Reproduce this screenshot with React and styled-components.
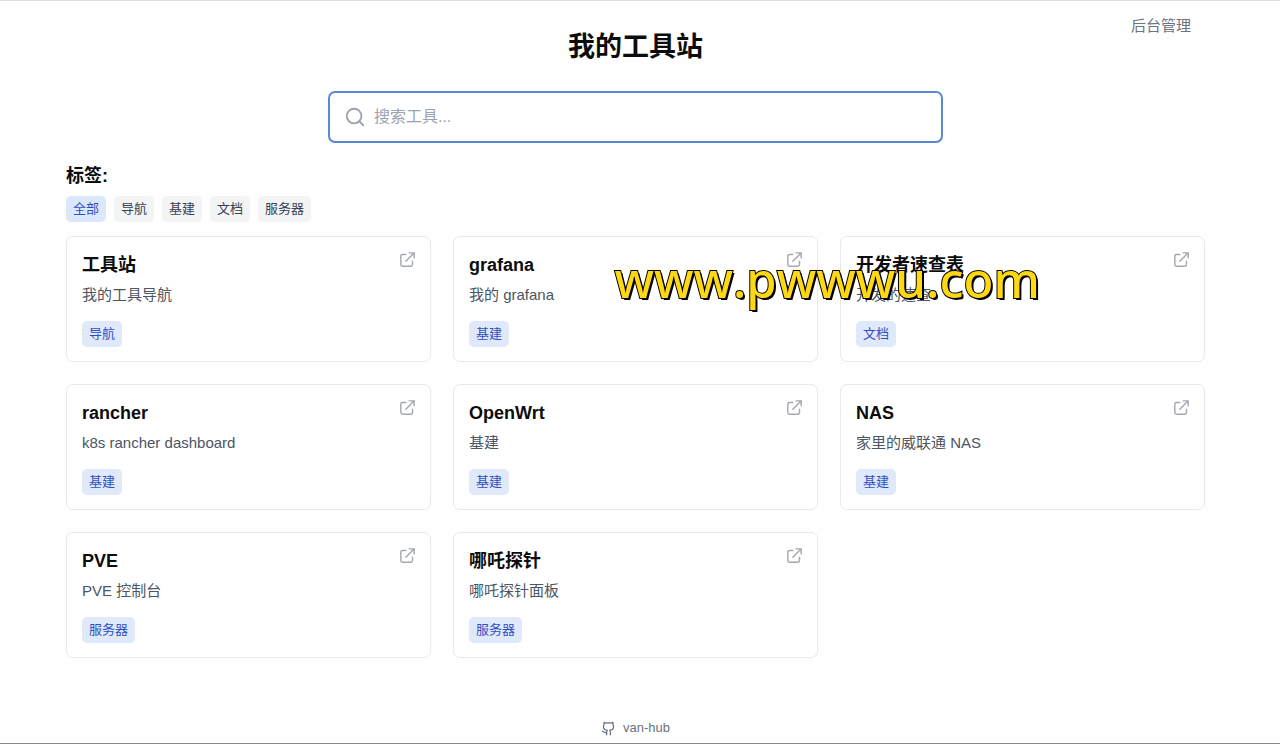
import React, { useState } from 'react';
import styled, { createGlobalStyle } from 'styled-components';
import { Github, Search } from 'lucide-react';

const GlobalStyle = createGlobalStyle`
  * {
    box-sizing: border-box;
  }

  body {
    margin: 0;
    background: #fefefe;
    color: #0c0c0c;
    font-family: 'Liberation Sans', 'Noto Sans CJK SC', sans-serif;
  }
`;

const Page = styled.div`
  position: relative;
  display: flex;
  flex-direction: column;
  min-height: 100vh;
  padding: 0 75px 0 66px;
  border-top: 1px solid #dedede;
  border-bottom: 1px solid #8c8c8c;
`;

const Header = styled.header`
  display: grid;
  grid-template-columns: 1fr auto 1fr;
  padding-top: 14px;
`;

const Title = styled.h1`
  grid-column: 2;
  margin: 13px 0 0;
  font-size: 27px;
  line-height: 38px;
`;

const AdminLink = styled.a`
  justify-self: end;
  align-self: start;
  margin-right: 14px;
  color: #6b7280;
  font-size: 15px;
  line-height: 22px;
  text-decoration: none;
`;

const SearchBox = styled.label`
  display: flex;
  align-items: center;
  gap: 8px;
  width: 54%;
  height: 52px;
  margin: 25px auto 0;
  padding: 0 14px;
  border: 2px solid #5c87d3;
  border-radius: 7px;
  background: #fff;
  color: #9ca3af;
`;

const SearchInput = styled.input`
  flex: 1;
  min-width: 0;
  padding: 0;
  border: none;
  outline: none;
  background: transparent;
  color: #111827;
  font-family: inherit;
  font-size: 16px;
  line-height: 24px;

  &::placeholder {
    color: #9ca3af;
    opacity: 1;
  }
`;

const FilterTitle = styled.h2`
  margin: 20px 0 7px;
  font-size: 18px;
  line-height: 26px;
`;

const TagList = styled.div`
  display: flex;
  flex-wrap: wrap;
  gap: 8px;
`;

const FilterTag = styled.button`
  height: 26px;
  padding: 0 7px;
  border: none;
  border-radius: 5px;
  background: ${props => (props.$active ? '#dbe7fb' : '#f3f4f6')};
  color: ${props => (props.$active ? '#2f4fc4' : '#374151')};
  font-family: inherit;
  font-size: 13px;
  line-height: 26px;
  cursor: pointer;
`;

const Grid = styled.main`
  display: grid;
  grid-template-columns: repeat(3, 1fr);
  gap: 22px;
  margin-top: 14px;
`;

const Card = styled.a`
  display: flex;
  align-items: flex-start;
  justify-content: space-between;
  padding: 15px 15px 14px;
  border: 1px solid #e8e9eb;
  border-radius: 7px;
  background: #fff;
  color: inherit;
  text-decoration: none;
`;

const CardTitle = styled.h3`
  margin: 0;
  font-size: 18px;
  line-height: 26px;
`;

const CardText = styled.p`
  margin: 6px 0 16px;
  color: #4b5563;
  font-size: 15px;
  line-height: 21px;
`;

const CardTag = styled.span`
  display: inline-block;
  padding: 0 7px;
  border-radius: 5px;
  background: #dfe9fa;
  color: #2f4fc4;
  font-size: 13px;
  line-height: 26px;
  vertical-align: top;
`;

const LinkIcon = styled.svg`
  flex: none;
  width: 15px;
  height: 15px;
  fill: none;
  stroke: #a3a7ae;
  stroke-width: 1.7;
  stroke-linecap: round;
  stroke-linejoin: round;
`;

const Footer = styled.footer`
  display: flex;
  justify-content: center;
  margin-top: auto;
  padding-bottom: 6px;
`;

const FooterLink = styled.a`
  display: flex;
  align-items: center;
  gap: 7px;
  color: #6b7280;
  font-size: 13px;
  line-height: 18px;
  text-decoration: none;
`;

const Watermark = styled.div`
  position: absolute;
  top: 250px;
  left: 48%;
  color: #ffd814;
  font-family: 'Noto Sans', sans-serif;
  font-size: 49px;
  font-weight: 500;
  font-kerning: none;
  line-height: 56px;
  white-space: nowrap;
  pointer-events: none;
  -webkit-text-stroke: 2px #000;
  paint-order: stroke fill;
  text-shadow: 2px 2px 0 #000;
`;

const tags = ['全部', '导航', '基建', '文档', '服务器'];

const tools = [
  { name: '工具站', description: '我的工具导航', tag: '导航' },
  { name: 'grafana', description: '我的 grafana', tag: '基建' },
  { name: '开发者速查表', description: '开发的速查', tag: '文档' },
  { name: 'rancher', description: 'k8s rancher dashboard', tag: '基建' },
  { name: 'OpenWrt', description: '基建', tag: '基建' },
  { name: 'NAS', description: '家里的威联通 NAS', tag: '基建' },
  { name: 'PVE', description: 'PVE 控制台', tag: '服务器' },
  { name: '哪吒探针', description: '哪吒探针面板', tag: '服务器' },
];

const ToolCard = ({ tool }) => (
  <Card href="#">
    <div>
      <CardTitle>{tool.name}</CardTitle>
      <CardText>{tool.description}</CardText>
      <CardTag>{tool.tag}</CardTag>
    </div>
    <LinkIcon viewBox="3 3 18 18" aria-hidden="true">
      <path d="M10 6H6a2 2 0 0 0-2 2v10a2 2 0 0 0 2 2h10a2 2 0 0 0 2-2v-4M14 4h6m0 0v6m0-6L10 14" />
    </LinkIcon>
  </Card>
);

const App = () => {
  const [activeTag, setActiveTag] = useState('全部');
  const [query, setQuery] = useState('');

  const visible = tools.filter(
    tool =>
      (activeTag === '全部' || tool.tag === activeTag) &&
      (tool.name + tool.description).toLowerCase().includes(query.toLowerCase())
  );

  return (
    <>
      <GlobalStyle />
      <Page lang="zh-CN">
        <Header>
          <Title>我的工具站</Title>
          <AdminLink href="#">后台管理</AdminLink>
        </Header>
        <SearchBox htmlFor="search">
          <Search size={22} aria-hidden="true" />
          <SearchInput
            id="search"
            type="text"
            placeholder="搜索工具..."
            value={query}
            onChange={e => setQuery(e.target.value)}
          />
        </SearchBox>
        <FilterTitle>标签:</FilterTitle>
        <TagList>
          {tags.map(tag => (
            <FilterTag key={tag} $active={tag === activeTag} onClick={() => setActiveTag(tag)}>
              {tag}
            </FilterTag>
          ))}
        </TagList>
        <Grid>
          {visible.map(tool => (
            <ToolCard key={tool.name} tool={tool} />
          ))}
        </Grid>
        <Footer>
          <FooterLink href="#">
            <Github size={15} aria-hidden="true" />
            van-hub
          </FooterLink>
        </Footer>
        <Watermark>www.pwwwu.com</Watermark>
      </Page>
    </>
  );
};

export default App;
